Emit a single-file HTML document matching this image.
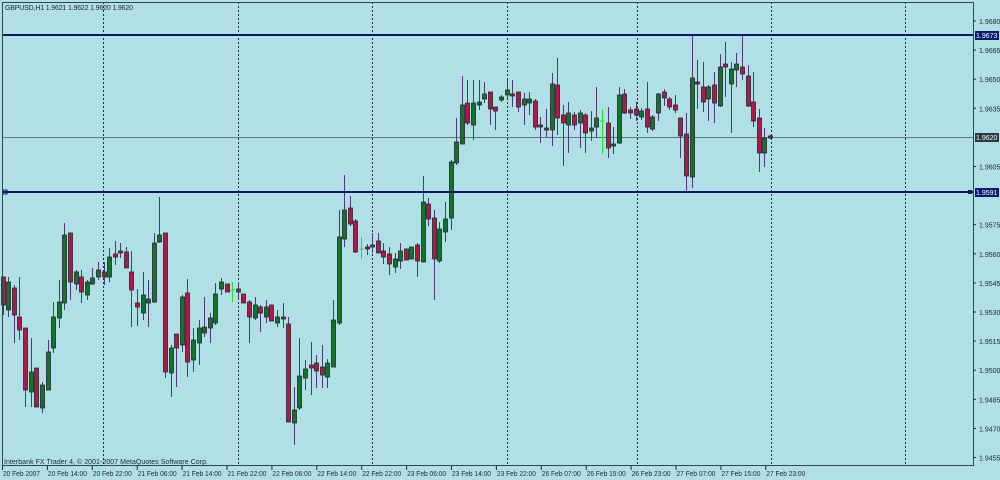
<!DOCTYPE html>
<html><head><meta charset="utf-8"><style>
html,body{margin:0;padding:0;background:#b0e0e6;width:1000px;height:480px;overflow:hidden}
svg{display:block}
text{font-family:"Liberation Sans",sans-serif;font-size:7px;fill:#1a2a30}
</style></head><body>
<svg id="s" width="1000" height="480" xmlns="http://www.w3.org/2000/svg">
<rect x="0" y="0" width="1000" height="480" fill="#b0e0e6"/>
<g stroke="#1c3038" stroke-width="1" stroke-dasharray="2,2">
<line x1="103.5" y1="2" x2="103.5" y2="465"/><line x1="238.5" y1="2" x2="238.5" y2="465"/>
<line x1="372.5" y1="2" x2="372.5" y2="465"/><line x1="507.5" y1="2" x2="507.5" y2="465"/>
<line x1="637.5" y1="2" x2="637.5" y2="465"/><line x1="771.5" y1="2" x2="771.5" y2="465"/>
<line x1="905.5" y1="2" x2="905.5" y2="465"/>
</g>
<line x1="2" y1="137.5" x2="973" y2="137.5" stroke="#5a7878" stroke-width="1"/>
<g id="c"></g>
<line x1="2" y1="35" x2="973" y2="35" stroke="#0a1a60" stroke-width="2"/>
<line x1="2" y1="192" x2="973" y2="192" stroke="#0a1a60" stroke-width="2"/>
<rect x="3" y="190" width="4" height="4" fill="none" stroke="#0a1a60"/>
<rect x="968" y="190" width="4" height="4" fill="#0a1a60"/>
<rect x="2.5" y="2.5" width="971" height="463" fill="none" stroke="#2a4a50" stroke-width="1"/>
<text x="5" y="10" textLength="128">GBPUSD,H1  1.9621 1.9622 1.9620 1.9620</text>
<text x="4" y="464" textLength="204">Interbank FX Trader 4, © 2001-2007 MetaQuotes Software Corp.</text>
<g id="ax"></g>
<rect x="975" y="31" width="24" height="9" fill="#0a1a70"/><text x="976" y="38" style="fill:#fff">1.9673</text>
<rect x="975" y="133" width="24" height="9" fill="#2a3a40"/><text x="976" y="140" style="fill:#fff">1.9620</text>
<rect x="975" y="188" width="24" height="9" fill="#0a1a70"/><text x="976" y="195" style="fill:#fff">1.9591</text>
</svg>
<script>
var d=[[277,315,277,305],[277,317,310,282],[285,343,288,315],[277,340,317,330],[328,407,328,390],[338,407,392,372],[368,407,368,407],[382,413,408,385],[340,390,390,352],[302,353,348,317],[280,328,318,302],[223,310,303,235],[233,300,233,282],[270,290,284,272],[270,303,277,292],[280,300,295,282],[268,285,284,278],[262,280,277,270],[262,285,272,277],[248,282,277,257],[241,265,254,257],[243,258,251,252],[247,268,252,268],[251,327,272,290],[289,326,303,307],[272,320,313,295],[280,327,303,299],[233,303,302,243],[197,243,242,235],[233,378,233,372],[345,397,373,348],[334,387,334,348],[295,352,345,297],[279,377,293,362],[328,372,360,340],[320,365,343,328],[297,337,333,327],[313,343,328,318],[283,325,323,294],[278,295,289,282],[284,292,284,292],[282,302,290,290,'g'],[282,300,292,289],[294,303,294,303],[300,343,302,317],[297,320,318,305],
[305,332,307,313],[300,323,317,307],[305,321,305,321],[310,327,323,317],[303,328,317,318],[317,422,324,422],[387,445,423,410],[338,410,408,376],[360,390,378,369],[342,395,365,368],[355,388,363,371],[345,388,367,375],[359,388,377,363],[300,367,367,320],[210,325,323,237],[175,247,239,210],[196,226,208,224],[219,253,221,252],[237,259,249,249,'g'],[244,255,247,249],[233,253,245,247],[233,253,241,253],[243,264,251,257],[247,275,254,264],[253,273,267,259],[243,269,261,251],[249,260,249,260],[247,259,259,247],[243,277,245,261],[176,262,262,202],[198,226,204,219],[210,300,218,259],[222,263,261,229],[202,242,232,219],[160,230,218,162],
[118,165,163,142],[76,144,144,105],[80,125,103,123],[80,140,125,103],[80,110,105,102],[82,103,99,94],[92,125,92,109],[107,130,107,111],[95,102,100,97],[80,98,95,90],[80,107,94,95],[92,112,92,107],[93,125,105,99],[92,115,103,99],[99,130,101,127],[117,143,125,127],[109,137,130,128],[73,146,130,84],[58,135,85,118],[105,166,115,123],[102,153,125,113],[112,130,115,125],[110,148,123,113],[113,153,115,133],[111,141,131,128],[87,138,127,118],[109,154,121,121,'g'],[107,158,123,148],[127,154,146,144],[87,144,143,95],[89,114,94,113],[107,119,110,113],[102,121,109,115],[108,120,117,111],[82,133,109,127],[115,131,129,117],[93,121,113,94],[89,106,92,98],[97,110,99,107],[95,113,105,110],[118,158,118,136],[113,193,134,176],[35,188,177,78],[60,109,82,84],[62,112,87,102],[85,121,99,87],[72,123,85,103],[54,107,106,67],[42,97,64,67],[62,133,84,69],[53,87,70,64],[35,80,67,74],[65,107,76,106],[72,127,102,121],[109,172,118,153],[128,167,153,138],[135,139,136,138]];
var g=document.getElementById('c'),h='';
for(var i=0;i<d.length;i++){var c=d[i],x=Math.round(2.7+i*5.6)+0.5;
if(c[4]=='g'){h+='<line x1="'+x+'" y1="'+c[0]+'" x2="'+x+'" y2="'+c[1]+'" stroke="#20e030"/><line x1="'+(x-2)+'" y1="'+c[2]+'" x2="'+(x+2)+'" y2="'+c[2]+'" stroke="#20e030"/>';continue;}
h+='<line x1="'+x+'" y1="'+c[0]+'" x2="'+x+'" y2="'+c[1]+'" stroke="#4a3a78" stroke-width="1"/>';
var bull=c[3]<c[2],t=Math.min(c[2],c[3]),b=Math.max(c[2],c[3]);if(b-t<2)b=t+2;
h+='<rect x="'+(x-2)+'" y="'+t+'" width="4" height="'+(b-t)+'" fill="'+(bull?'#17702c':'#b01848')+'" stroke="#202830" stroke-width="0.8"/>';}
g.innerHTML=h;
var ax='',p=['1.9680','1.9665','1.9650','1.9635','1.9620','1.9605','1.9590','1.9575','1.9560','1.9545','1.9530','1.9515','1.9500','1.9485','1.9470','1.9455'];
for(var k=0;k<p.length;k++){var y=21+k*29.1;if(k==4||k==6)continue;ax+='<line x1="973" y1="'+y+'" x2="976" y2="'+y+'" stroke="#1a2a30"/><text x="979" y="'+(y+3)+'">'+p[k]+'</text>';}
var L=['20 Feb 2007','20 Feb 14:00','20 Feb 22:00','21 Feb 06:00','21 Feb 14:00','21 Feb 22:00','22 Feb 06:00','22 Feb 14:00','22 Feb 22:00','23 Feb 06:00','23 Feb 14:00','23 Feb 22:00','26 Feb 07:00','26 Feb 15:00','26 Feb 23:00','27 Feb 07:00','27 Feb 15:00','27 Feb 23:00'];
for(var j=0;j<L.length;j++){var xx=2+j*44.9;ax+='<line x1="'+(xx+0.5)+'" y1="466" x2="'+(xx+0.5)+'" y2="470" stroke="#1a2a30"/><text x="'+(xx+1)+'" y="476" textLength="'+(j==0?37:39)+'" lengthAdjust="spacingAndGlyphs">'+L[j]+'</text>';}
document.getElementById('ax').innerHTML=ax;
</script>
</body></html>
